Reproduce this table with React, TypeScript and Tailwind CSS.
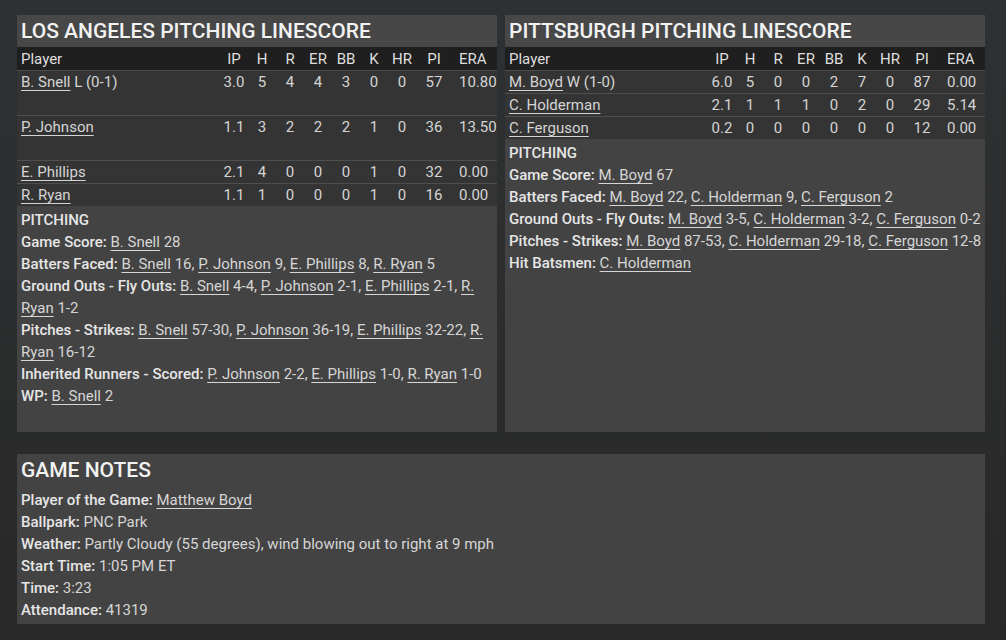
import React from "react";

type Row = { name: string; extra?: string; v: string[]; tall?: boolean };

const laRows: Row[] = [
  { name: "B. Snell", extra: " L (0-1)", v: ["3.0", "5", "4", "4", "3", "0", "0", "57", "10.80"], tall: true },
  { name: "P. Johnson", v: ["1.1", "3", "2", "2", "2", "1", "0", "36", "13.50"], tall: true },
  { name: "E. Phillips", v: ["2.1", "4", "0", "0", "0", "1", "0", "32", "0.00"] },
  { name: "R. Ryan", v: ["1.1", "1", "0", "0", "0", "1", "0", "16", "0.00"] },
];

const pitRows: Row[] = [
  { name: "M. Boyd", extra: " W (1-0)", v: ["6.0", "5", "0", "0", "2", "7", "0", "87", "0.00"] },
  { name: "C. Holderman", v: ["2.1", "1", "1", "1", "0", "2", "0", "29", "5.14"] },
  { name: "C. Ferguson", v: ["0.2", "0", "0", "0", "0", "0", "0", "12", "0.00"] },
];

const heads = ["IP", "H", "R", "ER", "BB", "K", "HR", "PI", "ERA"];

function cellClass(i: number) {
  if (i < 7) return "w-[28px] shrink-0 text-center";
  if (i === 7) return "w-[36px] shrink-0 text-center";
  return "w-[45px] shrink-0 pl-[7px] text-left whitespace-nowrap";
}

function A({ children }: { children: React.ReactNode }) {
  return <span className="underline underline-offset-[3px] decoration-1">{children}</span>;
}

function B({ children }: { children: React.ReactNode }) {
  return <span className="font-medium text-[#e6e6e6]">{children}</span>;
}

function Table({ rows }: { rows: Row[] }) {
  return (
    <div className="text-[15px]">
      <div className="flex h-[23px] items-center bg-[#1f1f1f] text-[#dedede]">
        <div className="w-[203px] shrink-0 pl-1">Player</div>
        {heads.map((h, i) => (
          <div key={h} className={cellClass(i)}>{h}</div>
        ))}
      </div>
      {rows.map((r) => (
        <div
          key={r.name}
          className={`flex border-t border-[#4e4e4e] bg-[#343434] text-[#d4d4d4] ${r.tall ? "h-[45px]" : "h-[23px]"}`}
        >
          <div className="flex h-[22px] w-[203px] shrink-0 items-center pl-1 whitespace-nowrap">
            <A>{r.name}</A>
            {r.extra ? <span className="whitespace-pre">{r.extra}</span> : null}
          </div>
          {r.v.map((x, i) => (
            <div key={i} className={`flex h-[22px] items-center ${i < 8 ? "justify-center" : ""} ${cellClass(i)}`}>
              {x}
            </div>
          ))}
        </div>
      ))}
    </div>
  );
}

function Panel({ title, children }: { title: string; children: React.ReactNode }) {
  return (
    <div className="flex h-[417px] w-[480px] flex-col bg-[#434343]">
      <div className="flex h-[32px] items-center bg-[#474747] pl-1 text-[21px] font-medium text-[#f2f2f2]">
        {title}
      </div>
      {children}
    </div>
  );
}

export default function App() {
  return (
    <div
      className="min-h-screen w-full bg-gradient-to-b from-[#2e3133] to-[#282828] pl-[17px] pt-[15px] text-[15px] leading-[22px] text-[#d6d6d6]"
      style={{ fontFamily: "Roboto, 'Noto Sans', sans-serif", minHeight: 640 }}
    >
      <div className="flex gap-2">
        <Panel title="LOS ANGELES PITCHING LINESCORE">
          <Table rows={laRows} />
          <div className="px-1 pt-[3px]">
            <div className="font-medium text-[#e6e6e6]">PITCHING</div>
            <div><B>Game Score:</B> <A>B. Snell</A> 28</div>
            <div><B>Batters Faced:</B> <A>B. Snell</A> 16, <A>P. Johnson</A> 9, <A>E. Phillips</A> 8, <A>R. Ryan</A> 5</div>
            <div><B>Ground Outs - Fly Outs:</B> <A>B. Snell</A> 4-4, <A>P. Johnson</A> 2-1, <A>E. Phillips</A> 2-1, <A>R.</A><br /><A>Ryan</A> 1-2</div>
            <div><B>Pitches - Strikes:</B> <A>B. Snell</A> 57-30, <A>P. Johnson</A> 36-19, <A>E. Phillips</A> 32-22, <A>R.</A><br /><A>Ryan</A> 16-12</div>
            <div><B>Inherited Runners - Scored:</B> <A>P. Johnson</A> 2-2, <A>E. Phillips</A> 1-0, <A>R. Ryan</A> 1-0</div>
            <div><B>WP:</B> <A>B. Snell</A> 2</div>
          </div>
        </Panel>
        <Panel title="PITTSBURGH PITCHING LINESCORE">
          <Table rows={pitRows} />
          <div className="pl-1 pt-[3px] whitespace-nowrap">
            <div className="font-medium text-[#e6e6e6]">PITCHING</div>
            <div><B>Game Score:</B> <A>M. Boyd</A> 67</div>
            <div><B>Batters Faced:</B> <A>M. Boyd</A> 22, <A>C. Holderman</A> 9, <A>C. Ferguson</A> 2</div>
            <div><B>Ground Outs - Fly Outs:</B> <A>M. Boyd</A> 3-5, <A>C. Holderman</A> 3-2, <A>C. Ferguson</A> 0-2</div>
            <div><B>Pitches - Strikes:</B> <A>M. Boyd</A> 87-53, <A>C. Holderman</A> 29-18, <A>C. Ferguson</A> 12-8</div>
            <div><B>Hit Batsmen:</B> <A>C. Holderman</A></div>
          </div>
        </Panel>
      </div>
      <div className="mt-[22px] flex h-[170px] w-[968px] flex-col bg-[#434343]">
        <div className="flex h-[32px] items-center pl-1 text-[21px] font-medium text-[#f2f2f2]">GAME NOTES</div>
        <div className="px-1 pt-[3px]">
          <div><B>Player of the Game:</B> <A>Matthew Boyd</A></div>
          <div><B>Ballpark:</B> PNC Park</div>
          <div><B>Weather:</B> Partly Cloudy (55 degrees), wind blowing out to right at 9 mph</div>
          <div><B>Start Time:</B> 1:05 PM ET</div>
          <div><B>Time:</B> 3:23</div>
          <div><B>Attendance:</B> 41319</div>
        </div>
      </div>
    </div>
  );
}
